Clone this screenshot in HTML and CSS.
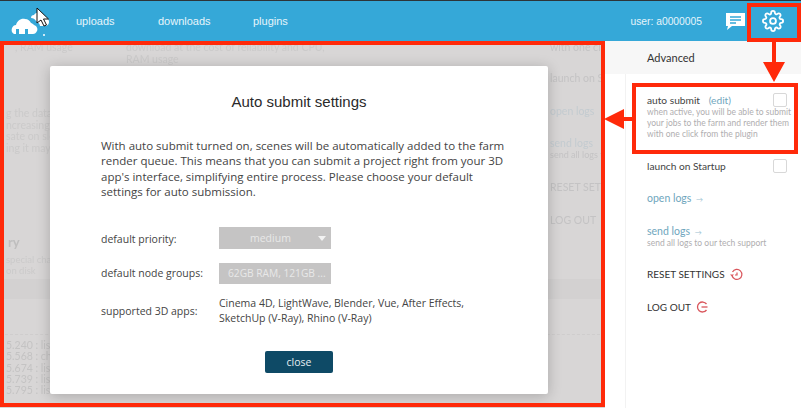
FILE: index.html
```html
<!DOCTYPE html>
<html lang="en">
<head>
<meta charset="utf-8">
<title>Auto submit settings</title>
<link rel="stylesheet" href="styles.css">
</head>
<body>
<div class="app">
  <header class="topbar">
    <svg class="logo" width="46" height="26" viewBox="0 0 46 26"><path fill="#fff" d="M3 24c-2-1-3-3-2-6 1-2 2-3 4-3 1-4 5-7 9-6 3 0 5 2 6 4 1 0 2 1 3 2 3 1 4 4 3 6-1 2-2 3-4 3h-5v-5h-3v5h-6v-5h-3v5z"/><path fill="#fff" d="M20 8c0-2 1-3 3-3 1-2 4-3 6-2 2 0 4 2 4 4 3 0 5 2 5 5 0 2-1 3-3 4l-6 0c0-2-2-4-4-5-1-2-3-3-5-3z"/><circle cx="33" cy="25" r="1" fill="#fff"/></svg>
    <nav class="nav">
      <a class="nav-item">uploads</a>
      <a class="nav-item">downloads</a>
      <a class="nav-item">plugins</a>
    </nav>
    <span class="user">user: a0000005</span>
    <svg class="chat" width="19" height="18" viewBox="0 0 19 18"><path fill="#fff" d="M0 1h19v13H6l-5 4 1-4H0z"/><path stroke="#35a8d8" stroke-width="1.4" d="M4 5h11M4 8h11M4 11h6"/></svg>
    <span class="gear-cell">
      <svg width="22" height="22" viewBox="0 0 24 24" fill="none" stroke="#fff" stroke-width="2" stroke-linejoin="round"><circle cx="12" cy="12" r="3.2"/><path d="M19.4 15a1.65 1.65 0 0 0 .33 1.82l.06.06a2 2 0 1 1-2.83 2.83l-.06-.06a1.65 1.65 0 0 0-2.82 1.17V21a2 2 0 1 1-4 0v-.09A1.65 1.65 0 0 0 7.2 19.7l-.06.06a2 2 0 1 1-2.83-2.83l.06-.06A1.65 1.65 0 0 0 3.2 14H3a2 2 0 1 1 0-4h.09A1.65 1.65 0 0 0 4.3 7.2l-.06-.06a2 2 0 1 1 2.83-2.83l.06.06A1.65 1.65 0 0 0 10 3.2V3a2 2 0 1 1 4 0v.09a1.65 1.65 0 0 0 2.8 1.17l.06-.06a2 2 0 1 1 2.83 2.83l-.06.06A1.65 1.65 0 0 0 20.8 10H21a2 2 0 1 1 0 4h-.09a1.65 1.65 0 0 0-1.51 1z"/></svg>
    </span>
  </header>

  <main class="main">
    <section class="dimmed">
      <div class="ghost">
        <div class="ghost-top">
          <p class="ghost-a">, RAM usage</p>
          <p class="ghost-b">download at the cost of reliability and CPU,<br>RAM usage</p>
        </div>
        <p class="ghost-left">g the data al<br>ncreasing it<br>sate on slow<br>ing it may ca</p>
        <p class="ghost-head">ry</p>
        <p class="ghost-small">special char<br>on disk</p>
        <div class="ghost-band"></div>
        <p class="ghost-log">5.240 : listi<br>5.568 : chec<br>5.674 : listi<br>5.739 : listi<br>5.795 : listi</p>
        <div class="ghost-side">
          <p class="gs-a">with one cl</p>
          <p class="gs-b">launch on S</p>
          <p class="gs-link gs-c">open logs</p>
          <p class="gs-link gs-d">send logs</p>
          <p class="gs-e">send all logs t</p>
          <p class="gs-f">RESET SET</p>
          <p class="gs-g">LOG OUT</p>
        </div>
      </div>
      <div class="modal">
        <h1 class="modal-title">Auto submit settings</h1>
        <p class="modal-text">With auto submit turned on, scenes will be automatically added to the farm render queue. This means that you can submit a project right from your 3D app's interface, simplifying entire process. Please choose your default settings for auto submission.</p>
        <div class="form">
          <span class="label">default priority:</span>
          <div class="select select-priority"><span>medium</span><i class="caret"></i></div>
          <span class="label">default node groups:</span>
          <div class="select select-groups"><span>62GB RAM, 121GB ...</span></div>
          <span class="label">supported 3D apps:</span>
          <div class="apps">Cinema 4D, LightWave, Blender, Vue, After Effects,<br>SketchUp (V-Ray), Rhino (V-Ray)</div>
        </div>
        <div class="modal-actions"><button class="close-btn">close</button></div>
      </div>
    </section>

    <aside class="sidebar">
      <div class="side-head">Advanced</div>
      <div class="side-body">
        <div class="opt opt-auto">
          <div class="opt-row"><span class="opt-name">auto submit <a class="edit">(edit)</a></span><i class="check"></i></div>
          <p class="hint">when active, you will be able to submit your jobs to the farm and render them with one click from the plugin</p>
        </div>
        <div class="opt-row opt-launch"><span class="opt-name">launch on Startup</span><i class="check"></i></div>
        <a class="side-link link-open">open logs <span class="arrow">→</span></a>
        <a class="side-link link-send">send logs <span class="arrow">→</span></a>
        <p class="hint hint-send">send all logs to our tech support</p>
        <div class="action action-reset">RESET SETTINGS
          <svg width="13" height="13" viewBox="0 0 13 13" fill="none" stroke="#d9555b" stroke-width="1.2"><path d="M2.5 4A5 5 0 1 1 2 7.500"/><path d="M0 6.500h4L2 8.500z" fill="#d9555b" stroke="none"/><path d="M7 4.500v2.500H5"/></svg>
        </div>
        <div class="action action-out">LOG OUT
          <svg width="12" height="12" viewBox="0 0 12 12" fill="none" stroke="#d9555b" stroke-width="1.300"><path d="M10.500 3A5 5 0 1 0 10.500 9"/><path d="M5.500 6H11.500"/></svg>
        </div>
      </div>
    </aside>
  </main>
</div>

<div class="mark mark-frame"></div>
<div class="mark mark-gear"></div>
<div class="mark mark-auto"></div>
<svg class="mark mark-down" width="24" height="42" viewBox="0 0 24 42"><path fill="#ff2a0a" d="M10 0h4v21H23L12 41 1 21h9z"/></svg>
<svg class="mark mark-left" width="30" height="22" viewBox="0 0 30 22"><path fill="#ff2a0a" d="M0 11 20 1v8h10v4H20v8z"/></svg>
<svg class="mark mark-cursor" width="14" height="20" viewBox="0 0 14 20"><path fill="#fff" stroke="#111" stroke-width="1" d="M1 1v15l4-3 3 6 2.500-1-3-6h5z"/></svg>
</body>
</html>
```

FILE: styles.css
```css
* { box-sizing: border-box; }
html, body { margin: 0; padding: 0; }
body {
  width: 801px;
  height: 408px;
  overflow: hidden;
  position: relative;
  background: #fff;
  font-family: "Open Sans", "Noto Sans", sans-serif;
  color: #3c3c3c;
}
p, h1 { margin: 0; font-weight: 400; }

.app { display: flex; flex-direction: column; height: 408px; }

.topbar {
  flex: none;
  height: 41px;
  display: flex;
  align-items: center;
  background: #35a8d8;
  border-top: 1px solid #2d3438;
  color: #e6f5fb;
  font-family: "Liberation Sans", sans-serif;
  font-size: 11px;
}
.logo { margin: 3px 0 0 11px; flex: none; }
.nav { display: flex; margin-left: 19px; }
.nav-item { width: 82px; }
.nav-item:nth-child(3) { margin-left: 13px; }
.user { margin-left: auto; font-size: 10.300px; }
.chat { margin-left: 24px; flex: none; }
.gear-cell { width: 56px; padding-left: 17px; display: flex; align-items: center; }

.main { flex: 1; display: flex; min-height: 0; }

.dimmed {
  flex: none;
  width: 605px;
  position: relative;
  background: #d8d6d6;
  overflow: hidden;
}
.ghost {
  height: 100%;
  position: relative;
  color: #cbcaca;
  font-family: "Lato", sans-serif;
  font-size: 10.500px;
  line-height: 12px;
  filter: blur(0.5px);
}
.ghost-top { display: flex; padding-left: 15px; }
.ghost-a { width: 111px; }
.ghost-left { margin-top: 43px; padding-left: 6px; line-height: 11.500px; }
.ghost-head { margin-top: 80px; padding-left: 8px; font-size: 13px; font-weight: 700; line-height: 16px; color: #bfbebe; }
.ghost-small { margin-top: 4px; padding-left: 6px; font-size: 9.500px; line-height: 11px; }
.ghost-band { margin-top: 3px; height: 20px; background: #d3d1d1; }
.ghost-log {
  margin-top: 35px;
  padding: 5px 0 0 6px;
  border-top: 1px dashed #cfcdcd;
  font-size: 10.500px;
  line-height: 11.300px;
  color: #c4c3c3;
}
.ghost-side { position: absolute; left: 550px; top: 0; white-space: nowrap; font-size: 10.500px; color: #c4c3c4; }
.gs-b { margin-top: 19px; }
.gs-c { margin-top: 21px; }
.gs-d { margin-top: 20px; }
.gs-link { color: #c3cbd0; }
.gs-e { font-size: 9px; }
.gs-f { margin-top: 20px; }
.gs-g { margin-top: 21px; }

.modal {
  position: absolute;
  left: 50px;
  top: 25px;
  width: 498px;
  height: 328px;
  padding: 25px 51px 0;
  background: #fff;
  border-radius: 2px;
  box-shadow: 0 2px 14px rgba(0, 0, 0, .22);
}
.modal-title {
  text-align: center;
  font-family: "Liberation Sans", sans-serif;
  font-size: 15px;
  line-height: 22px;
  color: #2a2a2a;
}
.modal-text {
  margin-top: 25px;
  width: 405px;
  font-size: 11.500px;
  line-height: 15.400px;
  color: #444;
}
.form {
  margin-top: 27px;
  display: grid;
  grid-template-columns: 118px 1fr;
  row-gap: 12px;
  align-items: center;
  font-size: 10.500px;
  color: #444;
}
.select {
  width: 112px;
  display: flex;
  align-items: center;
  background: #c5c4c4;
  color: #e8e8e8;
  font-size: 10.500px;
  position: relative;
}
.select-priority { height: 22px; margin-bottom: 2px; }
.select-groups { height: 21px; }
.select-priority span { margin-left: 31px; }
.select-groups span { margin-left: 9px; white-space: nowrap; font-size: 10.200px; }
.caret {
  position: absolute;
  right: 5px;
  top: 9px;
  border: 4px solid transparent;
  border-top: 5px solid #f2f2f2;
  border-bottom: 0;
}
.apps { line-height: 15px; }
.modal-actions { margin-top: 25px; display: flex; justify-content: center; }
.close-btn {
  width: 68px;
  height: 22px;
  padding: 0;
  border: 0;
  border-radius: 2px;
  background: #0e4a66;
  color: #e4edf1;
  font: 10.500px "Open Sans", sans-serif;
}

.sidebar { flex: 1; min-width: 0; background: #fff; display: flex; flex-direction: column; font-family: "Lato", sans-serif; }
.side-head {
  flex: none;
  height: 33px;
  padding: 9px 0 0 42px;
  background: #f7f7f7;
  font-size: 11px;
  line-height: 16px;
  color: #333;
}
.side-body {
  flex: 1;
  margin-left: 20px;
  padding-left: 21px;
  border-left: 1px solid #f2f2f2;
  font-size: 10.500px;
  color: #444;
}
.opt-auto { margin-top: 19px; padding-right: 8px; }
.opt-row { display: flex; justify-content: space-between; align-items: center; padding-right: 14px; height: 14px; }
.opt-auto .opt-row { padding-right: 6px; }
.opt-name { font-size: 10.200px; }
.edit { margin-left: 6px; color: #6fa6bd; }
.check {
  display: block;
  width: 14px;
  height: 14px;
  border: 1px solid #d8d8d8;
  border-radius: 2px;
}
.hint { font-size: 8.500px; line-height: 11px; color: #b0aeb0; }
.opt-launch { margin-top: 19px; }
.side-link { display: block; color: #6fa6bd; line-height: 14px; }
.arrow { margin-left: 2px; font-size: 7px; color: #9cc2d2; }
.link-open { margin-top: 18px; }
.link-send { margin-top: 18px; }
.hint-send { margin-top: -1px; }
.action { display: flex; align-items: center; gap: 5px; line-height: 14px; color: #333; font-size: 10px; }
.action-reset { margin-top: 18px; }
.action-out { margin-top: 19px; }

.mark { position: absolute; pointer-events: none; }
.mark-frame { left: 0; top: 41px; width: 605px; height: 366px; border: 4px solid #ff2a0a; }
.mark-gear { left: 747px; top: 3px; width: 54px; height: 39px; border: 4px solid #ff2a0a; }
.mark-auto { left: 632px; top: 83px; width: 166px; height: 71px; border: 4px solid #ff2a0a; }
.mark-down { left: 762px; top: 41px; }
.mark-left { left: 604px; top: 108px; }
.mark-cursor { left: 36px; top: 7px; }
```
